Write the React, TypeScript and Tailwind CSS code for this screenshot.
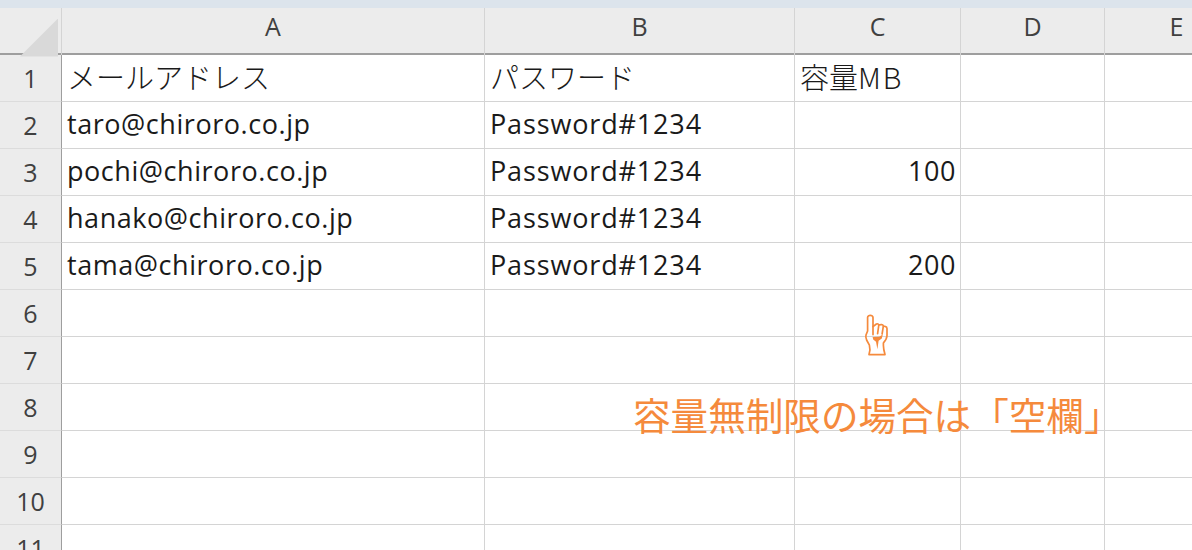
import type { ReactNode } from "react";

const columns = ["A", "B", "C", "D", "E"];

const rows: { id: number; mail: string; password: string; size: ReactNode; numeric: boolean }[] = [
  { id: 1, mail: "メールアドレス", password: "パスワード", size: <>容量<span className="tracking-[2px]">MB</span></>, numeric: false },
  { id: 2, mail: "taro@chiroro.co.jp", password: "Password#1234", size: "", numeric: false },
  { id: 3, mail: "pochi@chiroro.co.jp", password: "Password#1234", size: "100", numeric: true },
  { id: 4, mail: "hanako@chiroro.co.jp", password: "Password#1234", size: "", numeric: false },
  { id: 5, mail: "tama@chiroro.co.jp", password: "Password#1234", size: "200", numeric: true },
  { id: 6, mail: "", password: "", size: "", numeric: false },
  { id: 7, mail: "", password: "", size: "", numeric: false },
  { id: 8, mail: "", password: "", size: "", numeric: false },
  { id: 9, mail: "", password: "", size: "", numeric: false },
  { id: 10, mail: "", password: "", size: "", numeric: false },
  { id: 11, mail: "", password: "", size: "", numeric: false },
];

const gridCols = "grid grid-cols-[62px_423px_310px_166px_144px_144px]";
const cell = "border-r border-b border-[#d4d4d4] h-[47px] pl-[5px] pr-1 flex items-center text-[#1a1a1a] whitespace-nowrap overflow-hidden";

const PointingHand = () => (
  <svg width="26" height="46" viewBox="0 0 26 46" fill="none" stroke="#f58a3c" strokeWidth="1.7" strokeLinejoin="round" strokeLinecap="round">
    <path d="M3.6 17V3.4C3.6.6 9 .6 9 3.4v9.2l3.4-2.6c1.2-.6 2.2 0 2.4 1l2.4-.4c1.2-.2 2 .4 2.1 1.4l1.8.4c1.2.2 1.9 1 1.9 2.2v7c0 3.4-2 5.6-3.6 7.4v2.4c0 3.2 .6 5.6 1.6 9.2H5c1-3.4 1.2-6.8 .4-9.4L2.6 26c-.8-1.8-1-3.6-.6-5z" />
    <path d="M9 12.6v8M14.8 11l-1.2 8.6M19.3 12.4l-1.2 7.6" />
    <path d="M8.6 23l6.6-.2 3.6-2.2-1 4-3.2 2.2-1.2 8.4-1.4-7.4-2.8-2.2z" fill="#f58a3c" stroke="none" />
  </svg>
);

const CellText = ({ value, heading, wide }: { value: ReactNode; heading: boolean; wide?: boolean }) => (
  <span className={heading ? "font-['Noto_Sans_CJK_JP',sans-serif] font-light text-[29px] leading-[38px] pb-[5px]" : `font-['Open_Sans','Noto_Sans_CJK_JP',sans-serif] text-[27px] leading-[38px] pb-[3px] ${wide ? "tracking-[0.85px]" : "tracking-[0.55px]"}`}>
    {value}
  </span>
);

export default function App() {
  return (
    <div className="relative w-[1192px] h-[550px] overflow-hidden bg-white font-['Open_Sans','Noto_Sans_CJK_JP',sans-serif]">
      <div className="h-2 bg-[#dce4ec]" />

      <div className={`${gridCols} h-[47px] bg-[#ececec] border-b-2 border-[#9e9e9e]`}>
        <div className="border-r border-[#d4d4d4] flex items-end justify-end pr-[3px] pb-[3px]">
          <div className="w-[38px] h-[38px] bg-[#d9d9d9] [clip-path:polygon(100%_0,100%_100%,0_100%)]" />
        </div>
        {columns.map((col) => (
          <div key={col} className="border-r border-[#d4d4d4] flex items-center justify-center pb-[14px] text-[25px] text-[#404040]">
            {col}
          </div>
        ))}
      </div>

      {rows.map((row) => (
        <div key={row.id} className={gridCols}>
          <div className="h-[47px] bg-[#ececec] border-r border-b border-r-[#9e9e9e] border-b-[#dcdcdc] flex items-center justify-center pt-[2px] text-[25px] text-[#404040]">
            {row.id}
          </div>
          <div className={cell}><CellText value={row.mail} heading={row.id === 1} /></div>
          <div className={cell}><CellText value={row.password} heading={row.id === 1} wide /></div>
          <div className={`${cell} ${row.numeric ? "justify-end" : ""}`}><CellText value={row.size} heading={row.id === 1} /></div>
          <div className={cell} />
          <div className={cell} />
        </div>
      ))}

      <div className="absolute left-[864px] top-[314px]">
        <PointingHand />
      </div>
      <div className="absolute left-[633px] top-[389px] font-['Noto_Sans_CJK_JP',sans-serif] text-[37.6px] leading-[50px] text-[#f58a3c] whitespace-nowrap">
        容量無制限の場合は「空欄」
      </div>
    </div>
  );
}
